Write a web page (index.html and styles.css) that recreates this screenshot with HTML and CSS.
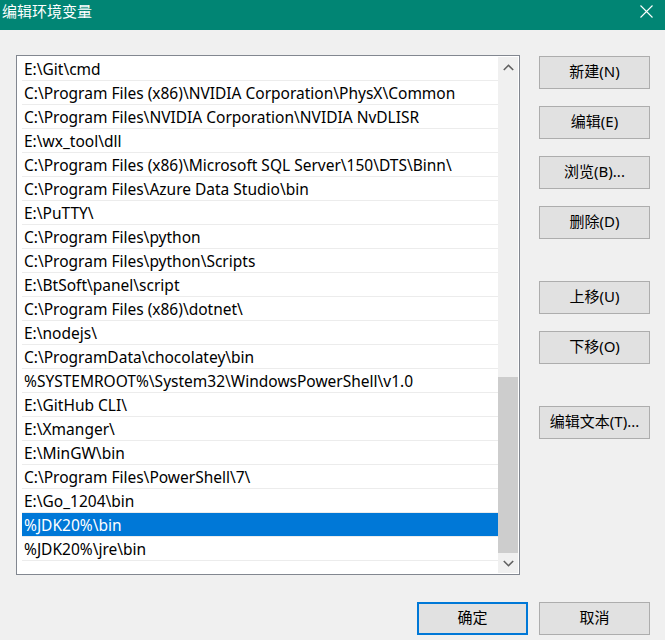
FILE: index.html
```html
<!DOCTYPE html>
<html lang="zh-CN">
<head>
<meta charset="utf-8">
<title>编辑环境变量</title>
<link rel="stylesheet" href="styles.css">
</head>
<body>
<div class="titlebar">
  <span class="title">编辑环境变量</span>
  <svg class="close" width="13" height="13" viewBox="0 0 13 13"><path d="M0.5 0.5 L12.5 12.5 M12.5 0.5 L0.5 12.5" stroke="#fff" stroke-width="1.1" fill="none"/></svg>
</div>
<div class="content">
  <div class="listbox">
    <ul class="items">
      <li>E:\Git\cmd</li>
      <li>C:\Program Files (x86)\NVIDIA Corporation\PhysX\Common</li>
      <li>C:\Program Files\NVIDIA Corporation\NVIDIA NvDLISR</li>
      <li>E:\wx_tool\dll</li>
      <li>C:\Program Files (x86)\Microsoft SQL Server\150\DTS\Binn\</li>
      <li>C:\Program Files\Azure Data Studio\bin</li>
      <li>E:\PuTTY\</li>
      <li>C:\Program Files\python</li>
      <li>C:\Program Files\python\Scripts</li>
      <li>E:\BtSoft\panel\script</li>
      <li>C:\Program Files (x86)\dotnet\</li>
      <li>E:\nodejs\</li>
      <li>C:\ProgramData\chocolatey\bin</li>
      <li>%SYSTEMROOT%\System32\WindowsPowerShell\v1.0</li>
      <li>E:\GitHub CLI\</li>
      <li>E:\Xmanger\</li>
      <li>E:\MinGW\bin</li>
      <li>C:\Program Files\PowerShell\7\</li>
      <li>E:\Go_1204\bin</li>
      <li class="selected">%JDK20%\bin</li>
      <li>%JDK20%\jre\bin</li>
    </ul>
    <div class="scrollbar">
      <div class="arrow">
        <svg width="11" height="7" viewBox="0 0 11 7"><polyline points="0.8,6 5.5,1.3 10.2,6" stroke="#606060" stroke-width="1.6" fill="none"/></svg>
      </div>
      <div class="track"></div>
      <div class="thumb"></div>
      <div class="arrow">
        <svg width="11" height="7" viewBox="0 0 11 7"><polyline points="0.8,1 5.5,5.7 10.2,1" stroke="#606060" stroke-width="1.6" fill="none"/></svg>
      </div>
    </div>
  </div>
  <div class="buttons">
    <button class="btn">新建(N)</button>
    <button class="btn">编辑(E)</button>
    <button class="btn">浏览(B)...</button>
    <button class="btn">删除(D)</button>
    <button class="btn group">上移(U)</button>
    <button class="btn">下移(O)</button>
    <button class="btn group">编辑文本(T)...</button>
  </div>
</div>
<div class="footer">
  <button class="btn primary">确定</button>
  <button class="btn">取消</button>
</div>
</body>
</html>
```

FILE: styles.css
```css
* { box-sizing: border-box; }
html, body {
  margin: 0;
  padding: 0;
}
body {
  width: 665px;
  height: 640px;
  background: #f0f0f0;
  font-family: "Noto Sans", "Noto Sans CJK SC", sans-serif;
  font-size: 15px;
  color: #000;
  overflow: hidden;
}
.titlebar {
  height: 30px;
  background: #018574;
  color: #fff;
  display: flex;
  align-items: flex-start;
  justify-content: space-between;
  padding: 0 12px 0 2px;
}
.title {
  font-family: "Noto Sans CJK SC", sans-serif;
  font-size: 15px;
  line-height: 22px;
}
.close {
  margin-top: 5px;
}
.content {
  display: flex;
  gap: 19px;
  padding: 25px 0 0 16px;
}
.listbox {
  width: 504px;
  height: 520px;
  border: 1px solid #828790;
  background: #fff;
  padding: 1px;
  display: flex;
}
.items {
  list-style: none;
  margin: 0;
  padding: 0 0 0 4px;
  width: 480px;
}
.items li {
  height: 24px;
  line-height: 24px;
  font-size: 15.5px;
  padding-left: 2px;
  border-bottom: 1px solid #ececec;
  white-space: nowrap;
  overflow: hidden;
}
.items li.selected {
  background: #0078d7;
  color: #fff;
}
.scrollbar {
  width: 20px;
  background: #f0f0f0;
  display: flex;
  flex-direction: column;
}
.arrow {
  height: 20px;
  display: flex;
  align-items: center;
  justify-content: center;
}
.track {
  flex: 1;
}
.thumb {
  height: 176px;
  background: #cdcdcd;
}
.buttons {
  display: flex;
  flex-direction: column;
  gap: 17px;
  padding-top: 1px;
}
.btn {
  width: 111px;
  height: 33px;
  background: #e1e1e1;
  border: 1px solid #adadad;
  font-family: "Noto Sans", "Noto Sans CJK SC", sans-serif;
  font-size: 15px;
  color: #000;
  padding: 0 0 3px 0;
  margin: 0;
  line-height: 20px;
}
.buttons .group {
  margin-top: 25px;
}
.footer {
  display: flex;
  justify-content: flex-end;
  gap: 11px;
  padding-right: 15px;
  margin-top: 27px;
}
.btn.primary {
  border: 2px solid #0078d7;
}
```
